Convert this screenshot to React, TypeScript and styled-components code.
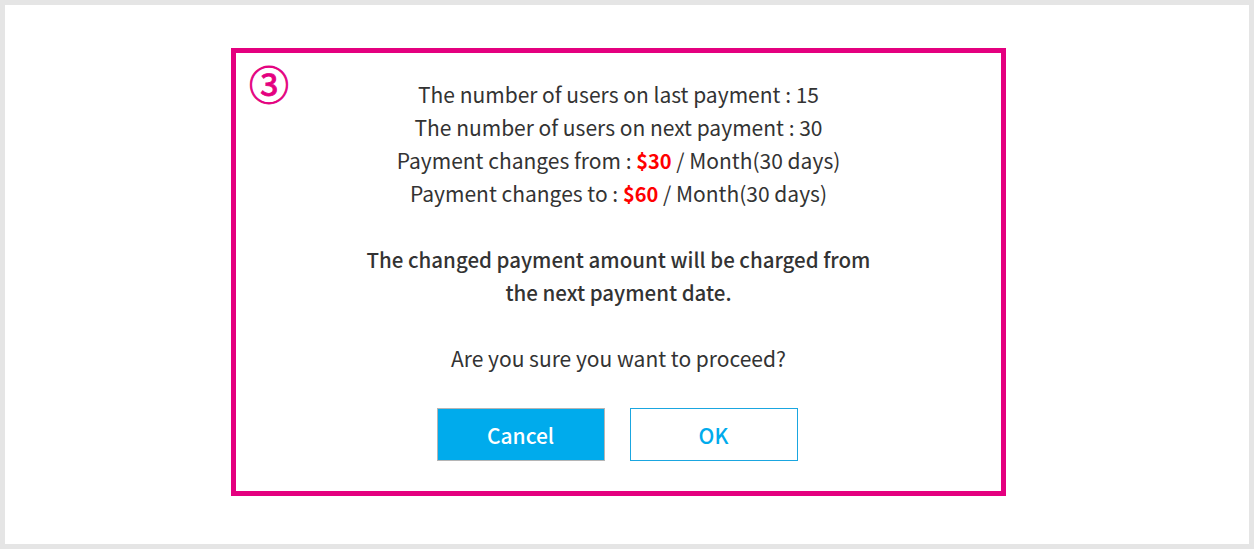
import React from "react";
import styled, { createGlobalStyle } from "styled-components";

const Global = createGlobalStyle`
  html, body { margin: 0; padding: 0; background: #e5e5e5; }
  body { font-family: "Noto Sans CJK JP", "Noto Sans", sans-serif; }
`;

const Frame = styled.div`
  box-sizing: border-box;
  width: 1254px;
  height: 549px;
  border: 5px solid #e5e5e5;
  background: #ffffff;
  padding: 43px 0 0 226px;
  display: flex;
  align-items: flex-start;
`;

const Dialog = styled.div`
  position: relative;
  box-sizing: border-box;
  width: 775px;
  height: 448px;
  border: 5px solid #e4007f;
  padding-top: 25px;
  display: flex;
  flex-direction: column;
  align-items: center;
`;

const StepBadge = styled.span`
  position: absolute;
  left: 13px;
  top: 10px;
  font-size: 40px;
  font-weight: 400;
  -webkit-text-stroke: 0.9px #e4007f;
  line-height: 1;
  color: #e4007f;
  font-family: "Noto Sans CJK JP", sans-serif;
`;

const Message = styled.p<{ $bold?: boolean }>`
  margin: 0;
  font-size: ${(p) => (p.$bold ? "20.5px" : "21px")};
  line-height: 33px;
  color: #333333;
  text-align: center;
  font-weight: ${(p) => (p.$bold ? 500 : 400)};
`;

const Gap = styled.div`
  height: 33px;
`;

const Price = styled.span`
  color: #ff0000;
  font-weight: 700;
  font-size: 20px;
`;

const Buttons = styled.div`
  display: flex;
  gap: 25px;
  margin-top: 33px;
  margin-left: -3px;
`;

const Button = styled.button<{ $primary?: boolean }>`
  box-sizing: border-box;
  width: 168px;
  height: 53px;
  font-family: "Noto Sans CJK JP", sans-serif;
  font-size: 21px;
  font-weight: 500;
  cursor: pointer;
  background: ${(p) => (p.$primary ? "#00abec" : "#ffffff")};
  color: ${(p) => (p.$primary ? "#ffffff" : "#00abec")};
  border: 1px solid ${(p) => (p.$primary ? "#b5b5b5" : "#1aa6e0")};
  padding: 0;
`;

export default function App() {
  return (
    <>
      <Global />
      <Frame>
        <Dialog>
          <StepBadge>③</StepBadge>
          <Message>
            The number of users on last payment : 15
            <br />
            The number of users on next payment : 30
            <br />
            Payment changes from : <Price>$30</Price> / Month(30 days)
            <br />
            Payment changes to : <Price>$60</Price> / Month(30 days)
          </Message>
          <Gap />
          <Message $bold>
            The changed payment amount will be charged from
            <br />
            the next payment date.
          </Message>
          <Gap />
          <Message>Are you sure you want to proceed?</Message>
          <Buttons>
            <Button $primary>Cancel</Button>
            <Button>OK</Button>
          </Buttons>
        </Dialog>
      </Frame>
    </>
  );
}
